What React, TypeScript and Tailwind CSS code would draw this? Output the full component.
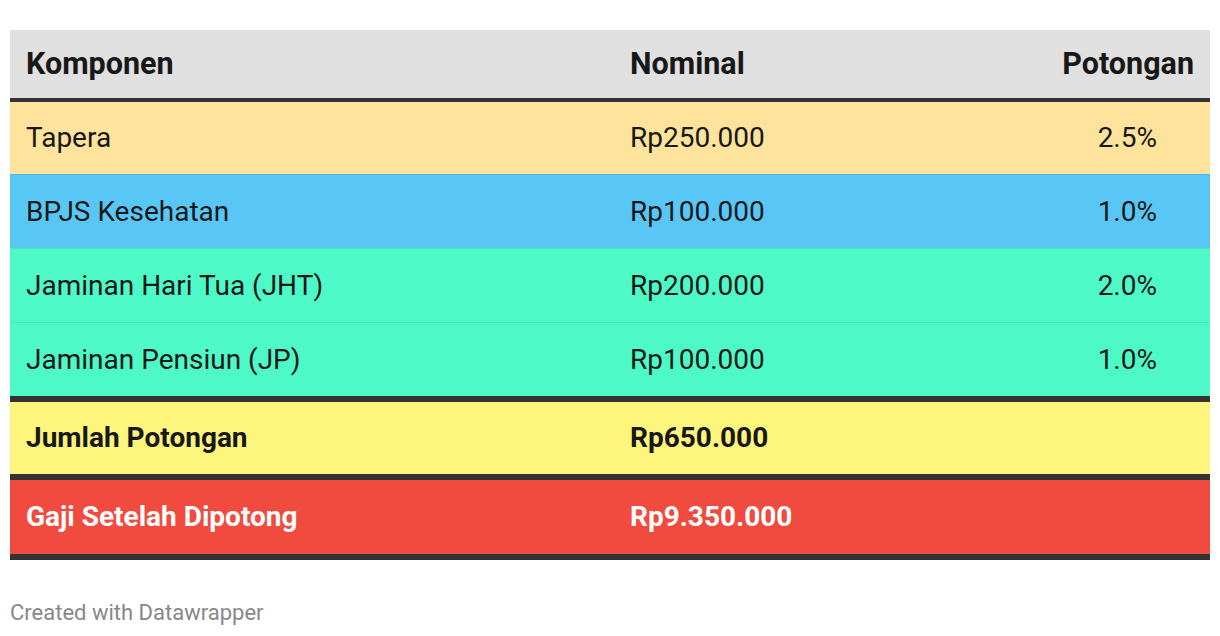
import React from "react";

const rows = [
  { k: "Tapera", n: "Rp250.000", p: "2.5%", bg: "bg-[#fee39c]" },
  { k: "BPJS Kesehatan", n: "Rp100.000", p: "1.0%", bg: "bg-[#59c7f6]" },
  { k: "Jaminan Hari Tua (JHT)", n: "Rp200.000", p: "2.0%", bg: "bg-[#4cf9c7]" },
  { k: "Jaminan Pensiun (JP)", n: "Rp100.000", p: "1.0%", bg: "bg-[#4cf9c7]" },
];

export default function App() {
  return (
    <div
      className="w-[1220px] h-[636px] bg-white px-[10px] pt-[30px] text-[#181818]"
      style={{ fontFamily: "Roboto, 'Noto Sans', sans-serif" }}
    >
      <div className="w-[1200px]">
        <div className="flex items-center h-[68px] bg-[#e0e0e0] border-b-[4px] border-[#333333] box-content text-[30.5px] font-bold">
          <div className="w-[602px] pl-[16px]">Komponen</div>
          <div className="flex-1 pl-[18px]">Nominal</div>
          <div className="pr-[16px] text-right">Potongan</div>
        </div>
        {rows.map((r, i) => (
          <div
            key={r.k}
            className={`flex items-center text-[28px] ${r.bg} ${
              i === 0 ? "h-[72px]" : "h-[74px] border-t-[1.5px] border-black/[0.07]"
            }`}
          >
            <div className="w-[602px] pl-[16px]">{r.k}</div>
            <div className="flex-1 pl-[18px]">{r.n}</div>
            <div className="pr-[53px] text-right">{r.p}</div>
          </div>
        ))}
        <div className="flex items-center h-[72px] bg-[#fef67c] border-t-[6px] border-b-[6px] border-[#333333] box-content text-[28px] font-bold">
          <div className="w-[602px] pl-[16px]">Jumlah Potongan</div>
          <div className="flex-1 pl-[18px]">Rp650.000</div>
        </div>
        <div className="flex items-center h-[74px] bg-[#f04b3e] border-b-[6px] border-[#333333] box-content text-[28px] font-bold text-white">
          <div className="w-[602px] pl-[16px]">Gaji Setelah Dipotong</div>
          <div className="flex-1 pl-[18px]">Rp9.350.000</div>
        </div>
      </div>
      <div className="mt-[40px] text-[22px] leading-[26px] text-[#888888]">
        Created with Datawrapper
      </div>
    </div>
  );
}
